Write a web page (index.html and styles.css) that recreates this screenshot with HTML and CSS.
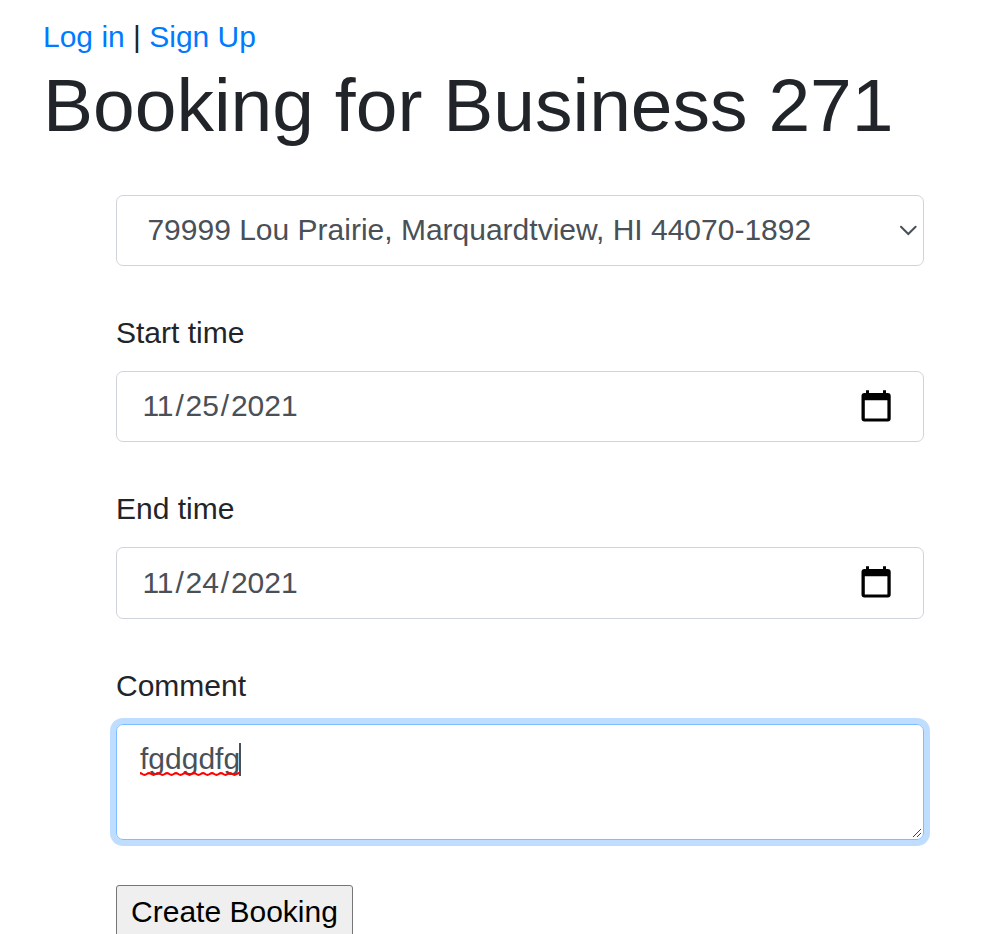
FILE: index.html
```html
<!DOCTYPE html>
<html lang="en">
<head>
<meta charset="utf-8">
<title>Booking</title>
<link rel="stylesheet" href="styles.css">
</head>
<body>
<nav class="nav"><a href="#">Log in</a> | <a href="#">Sign Up</a></nav>
<h1 class="title">Booking for Business 271</h1>
<main class="form">
  <div class="control select">
    <span>79999 Lou Prairie, Marquardtview, HI 44070-1892</span>
    <svg class="chevron" width="18" height="12" viewBox="0 0 18 12"><path d="M2 2.8 L9.3 10 L16.6 2.8" fill="none" stroke="#495057" stroke-width="2" stroke-linecap="round"/></svg>
  </div>
  <div class="label">Start time</div>
  <div class="control date">
    <span class="value"><span>11</span><i>/</i><span>25</span><i>/</i><span>2021</span></span>
    <svg class="calendar" width="30" height="33" viewBox="0 0 30 33"><path fill="#000" fill-rule="evenodd" d="M5 1.3h3v2.7h14V1.3h3v2.7h1.7q3 0 3 3v22.6q0 3-3 3H3.5q-3 0-3-3V7q0-3 3-3H5zM3.8 11.3v18.1h22.6V11.3z"/></svg>
  </div>
  <div class="label">End time</div>
  <div class="control date end">
    <span class="value"><span>11</span><i>/</i><span>24</span><i>/</i><span>2021</span></span>
    <svg class="calendar" width="30" height="33" viewBox="0 0 30 33"><path fill="#000" fill-rule="evenodd" d="M5 1.3h3v2.7h14V1.3h3v2.7h1.7q3 0 3 3v22.6q0 3-3 3H3.5q-3 0-3-3V7q0-3 3-3H5zM3.8 11.3v18.1h22.6V11.3z"/></svg>
  </div>
  <div class="label">Comment</div>
  <div class="comment"><span class="typed">fgdgdfg<svg class="squiggle" width="99" height="5" viewBox="0 0 99 5"><defs><pattern id="wave" width="9" height="5" patternUnits="userSpaceOnUse"><path d="M-2.25 2Q0 0.2 2.25 2T6.75 2T11.25 2" fill="none" stroke="#f00" stroke-width="2"/></pattern></defs><rect width="99" height="5" fill="url(#wave)"/></svg></span><span class="caret"></span>
    <svg class="grip" width="12" height="12" viewBox="0 0 12 12"><path d="M2 10L10 2M6 10L10 6" stroke="#444" fill="none"/></svg>
  </div>
  <button class="submit">Create Booking</button>
</main>
</body>
</html>
```
FILE: styles.css
```css
* { box-sizing: border-box; }
html { overflow: hidden; }
body { margin: 0; padding: 14px 67px 0 43px; height: 934px; overflow: hidden; font: 30px/45px "Liberation Sans", sans-serif; color: #212529; background: #fff; }
.nav { height: 46px; }
.nav a { color: #007bff; text-decoration: none; }
.title { margin: 0; font-size: 75px; line-height: 90px; font-weight: 400; white-space: nowrap; }
.form { padding: 45px 0 0 73px; }
.control { display: flex; align-items: center; justify-content: space-between; width: 808px; height: 71px; border: 1px solid #ced4da; border-radius: 7px; color: #495057; }
.select { padding: 0 6px 2px 30.4px; margin-bottom: 44px; }
.date { padding: 0 32px 2px 25.4px; margin-bottom: 44px; }
.end { height: 72px; padding-bottom: 1px; }
.end .calendar { margin-bottom: 2px; }
.value { display: flex; }
.value i { font-style: normal; width: 12px; text-align: center; }
.label { height: 45px; margin-bottom: 16px; }
.comment { position: relative; display: flex; width: 808px; height: 116px; padding: 11px 23px; border: 1px solid #80bdff; border-radius: 7px; box-shadow: 0 0 0 6px #bfdeff; color: #495057; }
.typed { position: relative; }
.squiggle { position: absolute; left: 0; top: 36px; }
.caret { width: 2px; height: 33px; margin: 7px 0 0 -1px; background: #495057; }
.grip { position: absolute; right: 0; bottom: 0; }
.submit { display: block; width: 237px; height: 56px; margin-top: 45px; padding: 0 0 2px; border: 1px solid #767676; border-radius: 3px; background: #efefef; color: #000; font: 30px/34px "Liberation Sans", sans-serif; }
```
